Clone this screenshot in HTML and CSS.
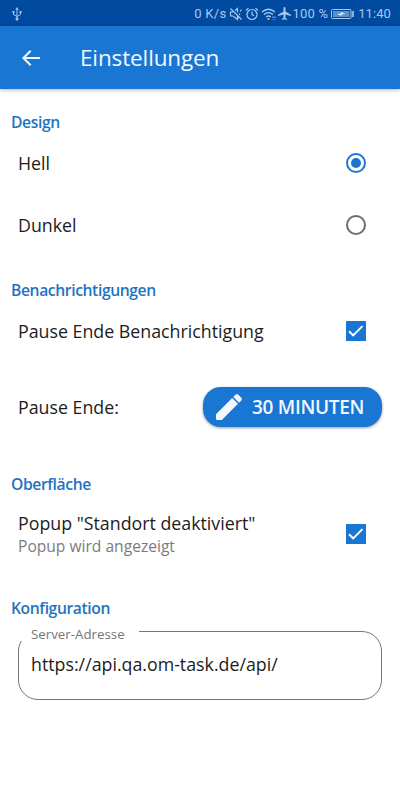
FILE: index.html
```html
<!DOCTYPE html>
<html lang="de">
<head>
<meta charset="utf-8">
<title>Einstellungen</title>
<link rel="stylesheet" href="styles.css">
</head>
<body>
<div class="status">
  <svg class="usb" width="10" height="14" viewBox="0 0 10 14" fill="none" stroke="currentColor"><path d="M5 2v9M1.500 5v2.500L5 9.500l3.500-2V5"/><path d="M5 0l1.700 2.800H3.300zM.5 4h2v2h-2zM7.500 4h2v2h-2z" fill="currentColor" stroke="none"/><circle cx="5" cy="12" r="1.500" fill="currentColor" stroke="none"/></svg>
  <span class="speed">0 K/s</span>
  <svg class="mute" width="14" height="14" viewBox="0 0 14 14" fill="none" stroke="currentColor" stroke-width="1.200"><path d="M4 5H1.500v4H4l4.500 3.500V9M6 3.500L8.500 1.500v4M1.500 1.500l11 11M10.500 6.500v1.500M11 4.500l1.500-2"/></svg>
  <svg class="alarm" width="14" height="14" viewBox="0 0 14 14" fill="none" stroke="currentColor" stroke-width="1.200"><circle cx="7" cy="7.500" r="5"/><path d="M7 4.500v3l2 1.500M1 3.500L3.500 1.200M13 3.500L10.500 1.200"/></svg>
  <svg class="wifi" width="16" height="14" viewBox="0 0 16 14" fill="none" stroke="currentColor" stroke-width="1.300"><path d="M1 5q6.500-5.500 13 0M3 7.600q4.500-3.800 9 0M5.200 10q2.300-2 4.600 0"/><circle cx="7.500" cy="12" r="1.100" fill="currentColor" stroke="none"/><path d="M12 9.500v3M14 9.500v3" stroke-width="1" stroke-dasharray="1.500 1"/></svg>
  <svg class="plane" width="13" height="13" viewBox="2 2 20 20" fill="currentColor"><path d="M22 16v-2l-8.500-5V3.500a1.500 1.500 0 0 0-3 0V9L2 14v2l8.500-2.500V19L8 20.500V22l4-1 4 1v-1.500L13.500 19v-5.500z"/></svg>
  <span class="percent">100 %</span>
  <svg class="battery" width="24" height="10" viewBox="0 0 24 10"><rect x=".5" y=".5" width="19.500" height="9" rx="1" fill="none" stroke="currentColor"/><rect x="2" y="2" width="16.500" height="6" fill="currentColor" opacity=".55"/><path d="M6 5l4-.6V3L14.500 5l-4 .6V7z" fill="#e2efff"/><path d="M22 2v6" stroke="currentColor" stroke-width="1.600"/></svg>
  <span class="clock">11:40</span>
</div>
<header class="appbar">
  <svg class="back" width="24" height="24" viewBox="0 0 24 24" fill="currentColor"><path d="M21 11H6.830l5.580-5.590L11 4l-8 8 8 8 1.410-1.410L6.830 13H21z"/></svg>
  <h1 class="title">Einstellungen</h1>
</header>
<main class="settings">
  <h2 class="heading"><span>Design</span></h2>
  <label class="row"><span class="label">Hell</span>
    <svg class="control" width="22" height="22" viewBox="0 0 22 22"><circle cx="11" cy="11" r="9" fill="none" stroke="#1976d2" stroke-width="2"/><circle cx="11" cy="11" r="5" fill="#1976d2"/></svg>
  </label>
  <label class="row"><span class="label">Dunkel</span>
    <svg class="control" width="22" height="22" viewBox="0 0 22 22"><circle cx="11" cy="11" r="9" fill="none" stroke="#6c6c6c" stroke-width="2"/></svg>
  </label>
  <h2 class="heading spaced"><span>Benachrichtigungen</span></h2>
  <label class="row"><span class="label">Pause Ende Benachrichtigung</span>
    <svg class="control" width="22" height="22" viewBox="0 0 22 22"><rect x="1" y="1" width="20" height="20" rx=".5" fill="#1976d2"/><path d="M4 11.200l4.200 4.200 9.300-9.300" fill="none" stroke="#fff" stroke-width="2"/></svg>
  </label>
  <div class="row tall"><span class="label">Pause Ende:</span>
    <button class="duration"><svg width="28" height="28" viewBox="0 0 28 28" fill="currentColor"><path d="M1 21.200L17.200 5l5.800 5.800L6.800 27H2a1 1 0 0 1-1-1zM18.300 3.900l2.200-2.200a2 2 0 0 1 2.800 0l3 3a2 2 0 0 1 0 2.800L24.100 9.700z"/></svg><span class="minutes">30 MINUTEN</span></button>
  </div>
  <h2 class="heading spaced surface"><span>Oberfläche</span></h2>
  <label class="row popup"><span class="texts"><span class="label">Popup "Standort deaktiviert"</span><span class="hint">Popup wird angezeigt</span></span>
    <svg class="control" width="22" height="22" viewBox="0 0 22 22"><rect x="1" y="1" width="20" height="20" rx=".5" fill="#1976d2"/><path d="M4 11.200l4.200 4.200 9.300-9.300" fill="none" stroke="#fff" stroke-width="2"/></svg>
  </label>
  <h2 class="heading spaced"><span>Konfiguration</span></h2>
  <div class="field"><span class="field-name">Server-Adresse</span><span class="url">https://api.qa.om-task.de/api/</span></div>
</main>
</body>
</html>
```
FILE: styles.css
```css
* { box-sizing: border-box; }
body { margin: 0; width: 400px; height: 800px; background: #fff; color: #1c1c1c; font-family: "Open Sans", sans-serif; overflow: hidden; }
svg { display: block; flex: none; }
span { white-space: nowrap; }
.status { height: 26px; background: #004a9f; color: #a9c8ef; display: flex; align-items: center; font: 13px/26px Roboto, sans-serif; padding: 1px 9px 0 12px; }
.speed { margin-left: auto; letter-spacing: .3px; }
.mute { margin-left: 3px; }
.alarm { margin-left: 2px; }
.wifi { margin-left: 2px; }
.plane { margin-left: 1px; }
.percent { margin-left: 1px; letter-spacing: .2px; }
.battery { margin-left: 3px; }
.clock { margin-left: 3px; letter-spacing: .1px; }
.appbar { height: 63px; background: #1976d2; color: #f1f8ff; display: flex; align-items: center; padding: 0 19px; box-shadow: 0 1px 4px rgba(0,0,0,.3); }
.title { margin: 0 0 0 37px; font-size: 22.5px; font-weight: 400; line-height: 29px; letter-spacing: -.13px; }
.settings { padding: 23px 18px 0; }
.heading { margin: 0 0 0 -7px; height: 20px; font-size: 15.7px; line-height: 20px; font-weight: 600; color: #1f73c4; letter-spacing: -.4px; }
.spaced { margin-top: 24px; }
.surface { margin-top: 22px; }
.row { display: flex; align-items: center; justify-content: space-between; height: 62px; }
.tall { height: 90px; }
.popup { height: 80px; }
.label { font-size: 17.8px; line-height: 24px; }
.control { margin-right: 15.500px; }
.texts { display: flex; flex-direction: column; }
.hint { font-size: 15.600px; line-height: 22px; color: #7c7c7c; }
.duration { display: flex; align-items: center; width: 179px; height: 40px; padding: 0 0 0 12px; border: 0; border-radius: 18px; background: #1976d2; color: #f1f8ff; font: 600 19px/24px "Open Sans", sans-serif; letter-spacing: -.3px; box-shadow: 0 1px 3px rgba(0,0,0,.4); }
.minutes { margin-left: 9px; }
.field { position: relative; margin-top: 13px; height: 69px; border: 1px solid #777; border-radius: 20px; padding: 20px 12px; }
.field-name { position: absolute; left: 2px; top: -9px; width: 118px; height: 18px; background: #fff; padding-left: 10px; font-size: 13.300px; line-height: 22px; color: #757575; }
.url { display: block; font-size: 17.8px; line-height: 25px; }
```
